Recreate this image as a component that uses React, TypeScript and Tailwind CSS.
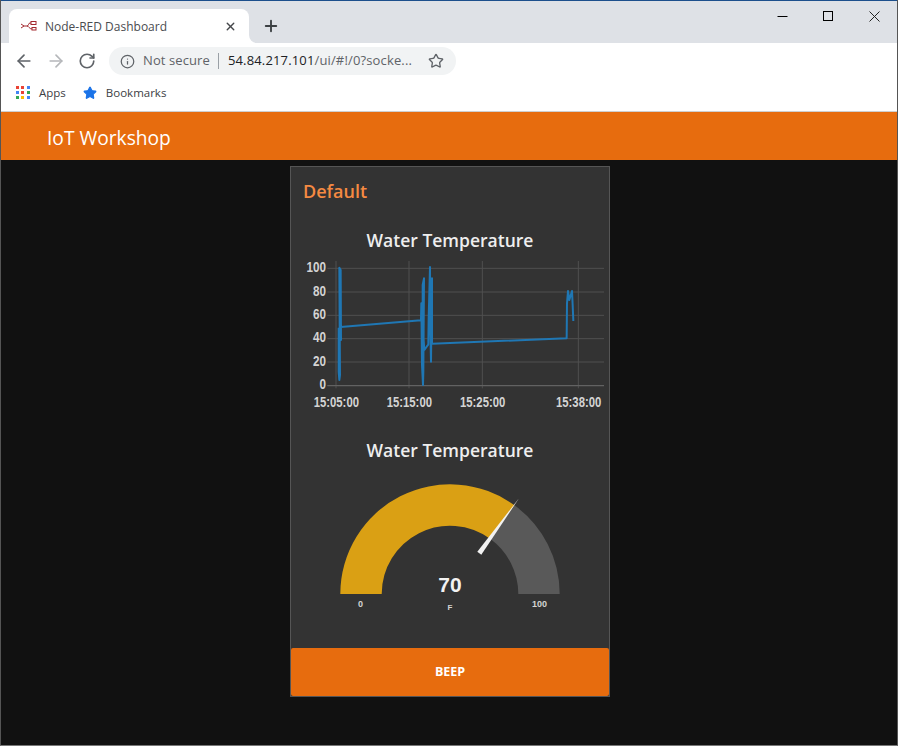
import React from "react";
import { ArrowLeft, ArrowRight, Info, Plus, RotateCw, Star, X } from "lucide-react";

const CHROME_FONT = "font-['Open_Sans',sans-serif]";

const linePoints =
    "146,308 146,440 148,465 150,450 148,128 152,135 153,345 152,306 393,286 394,235 396,420 399,480 400,440 402,160 398,180 398,300 403,375 415,358 416,280 420,126 421,310 423,410 426,160 426,356 830,340 831,235 834,198 838,225 846,198 848,240 850,288";

const yTicks = [
    { label: "100", y: 130 },
    { label: "80", y: 201 },
    { label: "60", y: 271 },
    { label: "40", y: 341 },
    { label: "20", y: 411 },
    { label: "0", y: 482 },
];

const xTicks = [
    { label: "15:05:00", x: 138 },
    { label: "15:15:00", x: 357 },
    { label: "15:25:00", x: 577 },
    { label: "15:38:00", x: 865 },
];

const appColors = ["#ea4335", "#ea4335", "#4285f4", "#4285f4", "#ea4335", "#34a853", "#34a853", "#fbbc04", "#4285f4"];

const TemperatureChart: React.FC = () => (
    <svg viewBox="3 90 954 480" className="block w-[318px] h-[160px] overflow-visible" fontFamily="'Liberation Sans', Arial, sans-serif">
        {yTicks.map((t) => (
            <line key={t.label} x1="112" x2="942" y1={t.y} y2={t.y} stroke="#505050" strokeWidth="3" />
        ))}
        {xTicks.map((t) => (
            <line key={t.label} x1={t.x} x2={t.x} y1="108" y2="490" stroke="#505050" strokeWidth="3" />
        ))}
        <line x1="112" x2="942" y1="482" y2="482" stroke="#666" strokeWidth="3" />
        {yTicks.map((t) => (
            <text
                key={t.label}
                x="108"
                y={t.y + 11}
                textAnchor="end"
                fill="#d4d4d4"
                fontSize="43"
                fontWeight="700"
                textLength={t.label.length * 19.5}
                lengthAdjust="spacingAndGlyphs"
            >
                {t.label}
            </text>
        ))}
        {xTicks.map((t) => (
            <text
                key={t.label}
                x={t.x + 1}
                y="545"
                textAnchor="middle"
                fill="#d4d4d4"
                fontSize="43"
                fontWeight="700"
                textLength="136"
                lengthAdjust="spacingAndGlyphs"
            >
                {t.label}
            </text>
        ))}
        <polyline points={linePoints} fill="none" stroke="#1f77b4" strokeWidth="6" strokeLinejoin="round" />
    </svg>
);

const TemperatureGauge: React.FC = () => (
    <svg viewBox="291 470 318 150" className="block w-[318px] h-[150px]" fontFamily="'Liberation Sans', Arial, sans-serif">
        <path d="M340.3 594 A109.7 109.7 0 0 1 514.5 505.3 L490.1 538.8 A68.3 68.3 0 0 0 381.7 594 Z" fill="#daa014" />
        <path d="M514.5 505.3 A109.7 109.7 0 0 1 559.7 594 L518.3 594 A68.3 68.3 0 0 0 490.1 538.8 Z" fill="#595959" />
        <polygon points="477.3,551.7 481.3,554.7 519,498.3" fill="#f2f2f2" />
        <text x="450" y="592" textAnchor="middle" fill="#f2f2f2" fontSize="21" fontWeight="700">
            70
        </text>
        <text x="450" y="610" textAnchor="middle" fill="#d4d4d4" fontSize="8" fontWeight="700">
            F
        </text>
        <text x="360.5" y="607" textAnchor="middle" fill="#d4d4d4" fontSize="9" fontWeight="700">
            0
        </text>
        <text x="539.5" y="607" textAnchor="middle" fill="#d4d4d4" fontSize="9" fontWeight="700">
            100
        </text>
    </svg>
);

const App: React.FC = () => {
    return (
        <div className="w-[898px] h-[746px] overflow-hidden flex flex-col bg-[#111111] border-x border-b border-x-[#555] border-b-[#777]">
            {/* browser window */}
            <div className={`${CHROME_FONT} shrink-0 bg-white text-[#3c4043]`}>
                <div className="h-[43px] bg-[#dee1e6] border-t border-[#1c4f8c] flex items-end pl-2">
                    <div className="relative w-[240px] h-[34px] bg-white rounded-t-lg flex items-center pl-3 pr-3">
                        <svg viewBox="0 0 16 10" className="w-4 h-[10px] shrink-0" fill="none" stroke="#a3282e" strokeWidth="1">
                            <path d="M0 3 L3 5 L0 7 M3 5 H6 C8 5 7 2 9 2 H10 M6 5 C8 5 8 8 11 8" />
                            <rect x="10" y="0.5" width="5" height="3" />
                            <rect x="11" y="6.5" width="4" height="2.5" />
                        </svg>
                        <span className="ml-2 pt-px text-[12px] text-[#4a4c50] whitespace-nowrap">Node-RED Dashboard</span>
                        <X className="ml-auto w-[13px] h-[13px] text-[#45474a]" strokeWidth={2.5} />
                        <div className="absolute -right-2 bottom-0 w-2 h-2 bg-white">
                            <div className="w-2 h-2 bg-[#dee1e6] rounded-bl-lg" />
                        </div>
                    </div>
                    <div className="h-[34px] flex items-center ml-[13px]">
                        <Plus className="w-[18px] h-[18px] text-[#3c4043]" strokeWidth={2.5} />
                    </div>
                    <div className="ml-auto self-start flex items-center h-[30px] text-black">
                        <div className="w-[46px] flex justify-center">
                            <svg width="11" height="11" viewBox="0 0 11 11">
                                <path d="M0.5 5.5 H10.5" stroke="black" />
                            </svg>
                        </div>
                        <div className="w-[46px] flex justify-center">
                            <svg width="11" height="11" viewBox="0 0 11 11">
                                <rect x="0.5" y="0.5" width="9" height="9" fill="none" stroke="black" />
                            </svg>
                        </div>
                        <div className="w-[46px] flex justify-center">
                            <svg width="11" height="11" viewBox="0 0 11 11">
                                <path d="M0.5 0.5 L10.5 10.5 M10.5 0.5 L0.5 10.5" stroke="#222" />
                            </svg>
                        </div>
                    </div>
                </div>
                <div className="h-[34px] pt-[2px] flex items-center">
                    <ArrowLeft className="ml-[13px] w-5 h-5 text-[#5f6368]" strokeWidth={2} />
                    <ArrowRight className="ml-3 w-5 h-5 text-[#b5b7ba]" strokeWidth={2} />
                    <RotateCw className="ml-[12px] w-[18px] h-[18px] text-[#5f6368]" strokeWidth={2.2} />
                    <div className="ml-[13px] w-[347px] h-[28px] rounded-full bg-[#f1f3f4] flex items-center pl-[11px] pr-[11px]">
                        <Info className="w-[15px] h-[15px] text-[#5f6368]" strokeWidth={2} />
                        <span className="ml-[8px] text-[13px] tracking-[0.1px] text-[#5f6368] whitespace-nowrap">Not secure</span>
                        <span className="ml-2 w-px h-4 bg-[#9aa0a6]" />
                        <span className="ml-[9px] text-[13px] tracking-[0.15px] text-[#5f6368] whitespace-nowrap">
                            <span className="text-[#202124]">54.84.217.101</span>/ui/#!/0?socke...
                        </span>
                        <Star className="ml-auto mr-px w-[16px] h-[16px] text-[#5f6368]" strokeWidth={2} />
                    </div>
                </div>
                <div className="h-[35px] pb-[3px] border-b border-[#cfcfcf] flex items-center pl-[15px] text-[11.5px] text-[#3c4043]">
                    <div className="grid grid-cols-3 gap-[2px] w-[14px]">
                        {appColors.map((c, i) => (
                            <span key={i} className="w-[3px] h-[3px]" style={{ backgroundColor: c }} />
                        ))}
                    </div>
                    <span className="ml-[9px]">Apps</span>
                    <Star className="ml-[17px] w-[14px] h-[14px] text-[#1a73e8] fill-[#1a73e8]" strokeWidth={2} />
                    <span className="ml-[9px]">Bookmarks</span>
                </div>
            </div>

            {/* dashboard */}
            <header className="shrink-0 h-[48px] pt-[4px] bg-[#e76c0e] flex items-center pl-[46px] text-white text-[19.2px] font-['Open_Sans',sans-serif]">
                IoT Workshop
            </header>
            <main className="flex-1 flex justify-center items-start pt-[6px] font-['Open_Sans',sans-serif]">
                <div className="w-[320px] h-[531px] ml-[2px] bg-[#333333] border border-[#555555] flex flex-col">
                    <div className="h-[49px] pl-[12px] flex items-center text-[18px] font-semibold text-[#f58a42]">Default</div>
                    <div className="h-[39px] pt-[10px] flex items-center justify-center text-[17.5px] font-semibold text-[#eeeeee]">
                        Water Temperature
                    </div>
                    <TemperatureChart />
                    <div className="h-[55px] pt-[15px] flex items-center justify-center text-[17.5px] font-semibold text-[#eeeeee]">
                        Water Temperature
                    </div>
                    <TemperatureGauge />
                    <button className="mt-[28px] h-[48px] pt-px bg-[#e76c0e] rounded-[2px] text-white text-[12.5px] font-bold">BEEP</button>
                </div>
            </main>
        </div>
    );
};

export default App;
